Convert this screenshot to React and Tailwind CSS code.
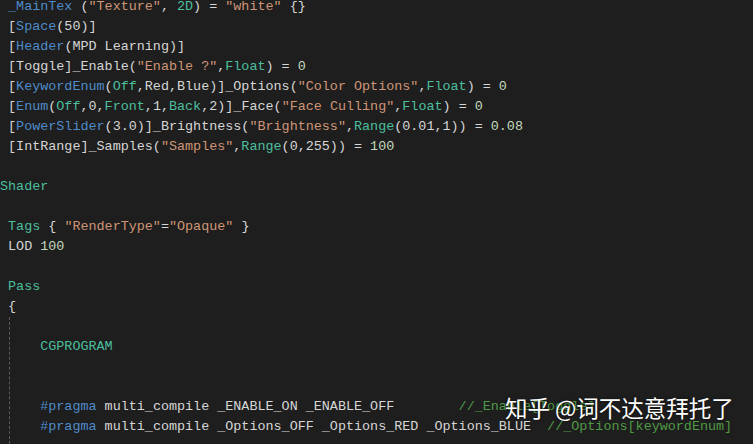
import React from 'react'

const C = {
  w: 'text-[#d6d6d6]',
  b: 'text-[#4f8cc9]',
  t: 'text-[#4cbf9f]',
  s: 'text-[#cf9677]',
  n: 'text-[#c4d9bd]',
  c: 'text-[#4f9a45]',
}

// each line is a list of [colorKey, text]
const lines = [
  [['b', ' _MainTex'], ['w', ' ('], ['s', '"Texture"'], ['w', ', '], ['t', '2D'], ['w', ') = '], ['s', '"white"'], ['w', ' {}']],
  [['w', ' ['], ['b', 'Space'], ['w', '(50)]']],
  [['w', ' ['], ['b', 'Header'], ['w', '(MPD Learning)]']],
  [['w', ' [Toggle]_Enable('], ['s', '"Enable ?"'], ['w', ','], ['t', 'Float'], ['w', ') = '], ['n', '0']],
  [['w', ' ['], ['b', 'KeywordEnum'], ['w', '('], ['t', 'Off'], ['w', ',Red,Blue)]_Options('], ['s', '"Color Options"'], ['w', ','], ['t', 'Float'], ['w', ') = '], ['n', '0']],
  [['w', ' ['], ['b', 'Enum'], ['w', '('], ['t', 'Off'], ['w', ',0,'], ['t', 'Front'], ['w', ',1,'], ['t', 'Back'], ['w', ',2)]_Face('], ['s', '"Face Culling"'], ['w', ','], ['t', 'Float'], ['w', ') = '], ['n', '0']],
  [['w', ' ['], ['b', 'PowerSlider'], ['w', '(3.0)]_Brightness('], ['s', '"Brightness"'], ['w', ','], ['t', 'Range'], ['w', '(0.01,1)) = '], ['n', '0.08']],
  [['w', ' [IntRange]_Samples('], ['s', '"Samples"'], ['w', ','], ['t', 'Range'], ['w', '(0,255)) = '], ['n', '100']],
  [],
  [['t', 'Shader']],
  [],
  [['w', ' '], ['t', 'Tags'], ['w', ' { '], ['s', '"RenderType"'], ['w', '='], ['s', '"Opaque"'], ['w', ' }']],
  [['w', ' LOD '], ['n', '100']],
  [],
  [['w', ' '], ['t', 'Pass']],
  [['w', ' {']],
  [],
  [['w', '     '], ['t', 'CGPROGRAM']],
  [],
  [],
  [['w', '     '], ['b', '#pragma'], ['w', ' multi_compile _ENABLE_ON _ENABLE_OFF        '], ['c', '//_Enable[Toggle]']],
  [['w', '     '], ['b', '#pragma'], ['w', ' multi_compile _Options_OFF _Options_RED _Options_BLUE  '], ['c', '//_Options[keywordEnum]']],
]

export default function App() {
  return (
    <div className="relative w-[753px] h-[444px] overflow-hidden bg-[#1e1e1e]">
      <div className="mt-[-3px] font-['Liberation_Mono',monospace] text-[13.42px] leading-[20px] whitespace-pre">
        {lines.map((toks, i) => (
          <div key={i} className="h-[20px]">
            {toks.map(([k, txt], j) => (
              <span key={j} className={C[k]}>{txt}</span>
            ))}
          </div>
        ))}
      </div>

      {/* indent guide */}
      <div className="absolute left-[9px] top-[317px] bottom-0 border-l border-dashed border-[#5a5a5a]" />

      {/* watermark */}
      <div className="absolute left-[505px] top-[392px] text-[22.5px] leading-[30px] text-white font-['Noto_Sans_CJK_SC',sans-serif] [text-shadow:0_0_3px_rgba(0,0,0,0.6)] whitespace-nowrap">
        知乎 @词不达意拜托了
      </div>
    </div>
  )
}
